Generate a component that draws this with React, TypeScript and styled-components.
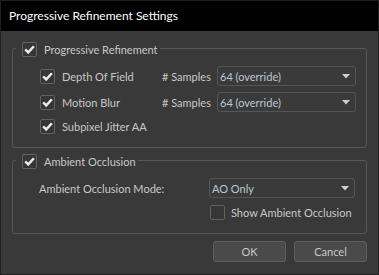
import React from "react"
import styled, {createGlobalStyle} from "styled-components"

const GlobalStyle = createGlobalStyle`
  html, body {
    margin: 0;
    padding: 0;
    background: #1f1f1f;
  }
  body {
    font-family: Lato, "Liberation Sans", sans-serif;
    font-size: 11px;
  }
`

export default function App() {
    return (
        <>
            <GlobalStyle/>
            <Window>
                <TitleBar>Progressive Refinement Settings</TitleBar>
                <Body>
                    <Group>
                        <GroupHeader>
                            <CheckBox checked/>
                            <HeaderText>Progressive Refinement</HeaderText>
                        </GroupHeader>
                        <Rows>
                            <Row>
                                <CheckBox checked/>
                                <RowLabel $width={100}>Depth Of Field</RowLabel>
                                <SamplesLabel># Samples</SamplesLabel>
                                <Select value="64 (override)" width={139}/>
                            </Row>
                            <Row>
                                <CheckBox checked/>
                                <RowLabel $width={100}>Motion Blur</RowLabel>
                                <SamplesLabel># Samples</SamplesLabel>
                                <Select value="64 (override)" width={139}/>
                            </Row>
                            <Row $short>
                                <CheckBox checked/>
                                <RowLabel>Subpixel Jitter AA</RowLabel>
                            </Row>
                        </Rows>
                    </Group>

                    <Group $second>
                        <GroupHeader>
                            <CheckBox checked/>
                            <HeaderText>Ambient Occlusion</HeaderText>
                        </GroupHeader>
                        <AoGrid>
                            <ModeLabel>Ambient Occlusion Mode:</ModeLabel>
                            <Select value="AO Only" width={146}/>
                            <span/>
                            <ShowRow>
                                <CheckBox/>
                                <RowLabel>Show Ambient Occlusion</RowLabel>
                            </ShowRow>
                        </AoGrid>
                    </Group>

                    <ButtonBar>
                        <Button>OK</Button>
                        <Button>Cancel</Button>
                    </ButtonBar>
                </Body>
            </Window>
        </>
    )
}

function CheckBox({checked}: {checked?: boolean}) {
    return (
        <Box>
            {checked &&
                <svg width="13" height="13" viewBox="0 0 13 13">
                    <path d="M2.2 6.4 L5.2 9.4 L10.9 3.2" fill="none" stroke="#ececec" strokeWidth="2.4"/>
                </svg>
            }
        </Box>
    )
}

function Select({value, width}: {value: string, width: number}) {
    return (
        <SelectBox style={{width: width}}>
            <SelectText>{value}</SelectText>
            <svg width="8" height="5" viewBox="0 0 8 5">
                <path d="M0 0 H8 L4 4.5 Z" fill="#cfcfcf"/>
            </svg>
        </SelectBox>
    )
}


const Window = styled.div`
  width: 377px;
  height: 273px;
  border: 1px solid #1f1f1f;
  background: #393939;
  display: flex;
  flex-direction: column;
  color: #c8c8c8;
`

const TitleBar = styled.div`
  height: 30px;
  flex: none;
  background: #000;
  color: #fff;
  font-size: 12px;
  line-height: 30px;
  padding-left: 8px;
`

const Body = styled.div`
  flex: 1;
  display: flex;
  flex-direction: column;
  padding: 17px 11px 12px 11px;
`

const Group = styled.div<{ $second?: boolean }>`
  box-sizing: border-box;
  height: ${p => p.$second ? 74 : 100}px;
  border: 1px solid #575757;
  border-radius: 3px;
  display: flex;
  flex-direction: column;
  padding: 0 10px 13px 26px;
  margin-top: ${p => p.$second ? 12 : 0}px;
`

const GroupHeader = styled.div`
  align-self: flex-start;
  display: flex;
  align-items: center;
  gap: 7px;
  height: 15px;
  margin: -7px 0 0 -23px;
  padding: 0 2px 0 6px;
  background: #393939;
`

const HeaderText = styled.span`
  line-height: 15px;
  color: #c8c8c8;
`

const Rows = styled.div`
  display: flex;
  flex-direction: column;
  gap: 6px;
  margin-top: 9px;
  padding-left: 1px;
`

const Row = styled.div<{ $short?: boolean }>`
  display: flex;
  align-items: center;
  height: ${p => p.$short ? 16 : 20}px;
`

const RowLabel = styled.span<{ $width?: number }>`
  margin-left: 7px;
  width: ${p => p.$width ? p.$width + "px" : "auto"};
  white-space: nowrap;
`

const SamplesLabel = styled.span`
  width: 55px;
  white-space: nowrap;
`

const Box = styled.span`
  width: 13px;
  height: 13px;
  flex: none;
  border: 1px solid #626262;
  border-radius: 2px;
  background: #363636;
  display: flex;
  align-items: center;
  justify-content: center;
`

const SelectBox = styled.div`
  box-sizing: border-box;
  height: 20px;
  border: 1px solid #555;
  border-radius: 3px;
  background: #3a3a3a;
  display: flex;
  align-items: center;
  justify-content: space-between;
  padding: 0 5px 0 2px;
  flex: none;
`

const SelectText = styled.span`
  color: #bcc6d2;
  white-space: nowrap;
`

const AoGrid = styled.div`
  display: grid;
  grid-template-columns: 170px 146px;
  row-gap: 7px;
  margin-top: 9px;
  align-items: center;
`

const ModeLabel = styled.span`
  white-space: nowrap;
`

const ShowRow = styled.div`
  display: flex;
  align-items: center;
  height: 15px;
  padding-left: 1px;

  span:last-child {
    margin-left: 6px;
  }
`

const ButtonBar = styled.div`
  display: flex;
  justify-content: flex-end;
  gap: 8px;
  margin-top: 7px;
`

const Button = styled.div`
  box-sizing: border-box;
  width: 73px;
  height: 21px;
  border: 1px solid #5e5e5e;
  border-radius: 3px;
  background: #4a4a4a;
  color: #c8c8c8;
  display: flex;
  align-items: center;
  justify-content: center;
`
